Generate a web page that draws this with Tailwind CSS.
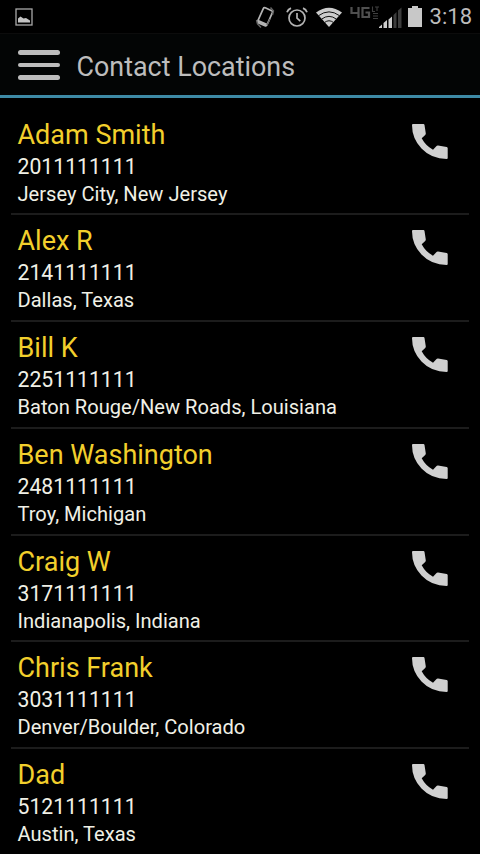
<!DOCTYPE html>
<html lang="en">
<head>
    <meta charset="UTF-8">
    <meta name="viewport" content="width=device-width, initial-scale=1.0">
    <script src="https://cdn.jsdelivr.net/npm/@tailwindcss/browser@4"></script>
    <title>Contact Locations</title>
</head>
<body class="bg-black font-['Roboto',sans-serif] h-[854px] overflow-hidden">
    <!-- status bar -->
    <div class="h-[34px] flex items-center justify-between pl-[15px] pr-2 border-b border-[#0c0c0c] text-[#bcbcbc]">
        <svg class="w-[18px] h-[18px]" viewBox="0 0 18 18" fill="none">
            <rect x="1" y="1" width="16" height="16" stroke="#a8a8a8" stroke-width="1.3"/>
            <path d="M3 14.500v-4l2.500-2 3 2 2.500-.5 4 2.500v2z" fill="#c4c4c4"/>
        </svg>
        <div class="flex items-center">
            <svg class="w-[20px] h-[24px]" viewBox="0 0 20 24" fill="none">
                <g transform="rotate(24 10 12)">
                    <rect x="5" y="3.500" width="10" height="16.500" rx="1.500" stroke="#b4b4b4" stroke-width="1.700"/>
                    <path d="M5 18.500h10" stroke="#b4b4b4" stroke-width="2.500"/>
                </g>
                <path d="M15.500 2.500l3 3.500-1 4M1.500 15l1 4 3.500 3.500M12 20l3-6" stroke="#666" stroke-width="1.400"/>
            </svg>
            <svg class="w-[22px] h-[22px] ml-[11px]" viewBox="0 0 22 22" fill="none" stroke="#b4b4b4">
                <circle cx="11" cy="12" r="8" stroke-width="1.7"/>
                <path d="M11 7v5.2l3.3 3" stroke-width="1.7"/>
                <path d="M1 6.2q1-2.8 4-4M21 6.2q-1-2.8-4-4" stroke-width="1.8"/>
            </svg>
            <svg class="w-[26px] h-[20px] ml-[8px]" viewBox="0 0 26 20">
                <path d="M13 20L0 5.500Q13-4 26 5.500z" fill="#cccccc"/>
                <path d="M2.500 8.700Q13 1 23.500 8.700M5.500 12.200Q13 6.500 20.500 12.200M8.500 15.500Q13 12 17.500 15.500" fill="none" stroke="#111" stroke-width="1"/>
            </svg>
            <div class="relative w-[53px] h-[24px] ml-[8px]">
                <!-- squared 4G LTE badge -->
                <svg class="absolute left-0 top-0 w-[30px] h-[16px]" viewBox="0 0 30 16" fill="none" stroke="#505050">
                    <path d="M1.500 2v6h8M8.500 2v11M19.500 3h-7v9h6.500V7.500h-3.500" stroke-width="2.200"/>
                    <path d="M22.500 1.500v5h2.500M25 2h4M27 2v4M23 8.500h5M23 11h5M23 13.500h5" stroke="#404040" stroke-width="1.100"/>
                </svg>
                <svg class="absolute left-[29px] top-[2px] w-[24px] h-[22px]" viewBox="0 0 24 22">
                    <path d="M0 21v-1l3-2.500V21zM4.500 21v-5l3.500-3V21zM9.500 21v-8.500l3.500-3V21z" fill="#cccccc"/>
                    <path d="M14.500 21V8l3-3v16zM19 21V3.500l3.500-3V21z" fill="#3c3c3c"/>
                </svg>
            </div>
            <svg class="w-[14px] h-[21px] ml-[5px]" viewBox="0 0 14 21">
                <path d="M4 0h6v2h4v19H0V2h4z" fill="#c8c8c8"/>
            </svg>
            <span class="ml-[8px] pt-px text-[22px] leading-[24px]">3:18</span>
        </div>
    </div>

    <!-- action bar -->
    <header class="h-[64px] flex items-center pl-[18px] pt-px bg-[#030505] border-b-[3px] border-[#3e8ba6]">
        <div class="w-[42px] flex flex-col gap-2">
            <span class="h-[4.5px] rounded-full bg-[#bdbdbd]"></span>
            <span class="h-[4.5px] rounded-full bg-[#bdbdbd]"></span>
            <span class="h-[4.5px] rounded-full bg-[#bdbdbd]"></span>
        </div>
        <h1 class="ml-[16.5px] pt-[4px] text-[26.9px] leading-8 text-[#bdbdbd]">Contact Locations</h1>
    </header>

    <ul id="contactList" class="pt-[10.5px] px-[11px]"></ul>

    <script>
        const contacts = [
            { name: 'Adam Smith', phone: '2011111111', location: 'Jersey City, New Jersey' },
            { name: 'Alex R', phone: '2141111111', location: 'Dallas, Texas' },
            { name: 'Bill K', phone: '2251111111', location: 'Baton Rouge/New Roads, Louisiana' },
            { name: 'Ben Washington', phone: '2481111111', location: 'Troy, Michigan' },
            { name: 'Craig W', phone: '3171111111', location: 'Indianapolis, Indiana' },
            { name: 'Chris Frank', phone: '3031111111', location: 'Denver/Boulder, Colorado' },
            { name: 'Dad', phone: '5121111111', location: 'Austin, Texas' }
        ];

        const contactList = document.getElementById('contactList');

        contacts.forEach(contact => {
            const row = document.createElement('li');
            row.className = 'h-[106.75px] flex justify-between pt-[9.2px] pl-[6.5px] pr-[21px] border-b-2 border-[#1c1c1c] last:border-b-0';
            row.innerHTML = `
                <div class="whitespace-nowrap">
                    <h2 class="text-[27px] leading-[34px] text-[#f2cf2c]">${contact.name}</h2>
                    <p class="text-[21.2px] leading-[29px] text-[#f0f0e6]">${contact.phone}</p>
                    <p class="text-[20.1px] leading-[27px] text-[#f0f0e6]">${contact.location}</p>
                </div>
                <svg class="w-[36px] h-[36px] mt-[6px] shrink-0" viewBox="0 0 36 36" fill="#d0d0d0">
                    <path d="M1 0H11.500Q12.300 0 12.500 1L13.800 9.500Q13.800 10.300 13.200 10.900L9.700 14.200Q13.500 21.500 21 25.700L24.300 22.200Q25 21.500 26 21.600L34.700 23Q35.700 23.200 35.700 24.200V34Q35.700 35 34.700 35Q19.500 35 9.500 24.500Q0 14.500 0 1Q0 0 1 0z"/>
                </svg>
            `;
            contactList.appendChild(row);
        });
    </script>
</body>
</html>
